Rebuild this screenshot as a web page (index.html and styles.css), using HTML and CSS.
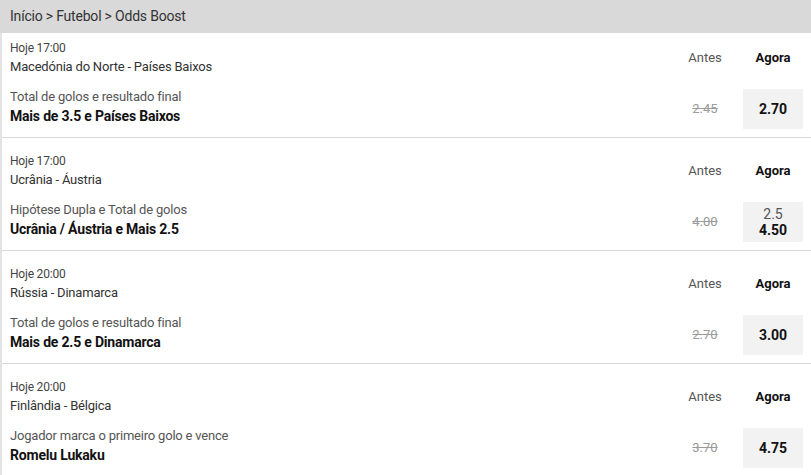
FILE: index.html
```html
<!DOCTYPE html>
<html lang="pt">
<head>
<meta charset="utf-8">
<link rel="stylesheet" href="styles.css">
</head>
<body>
<div class="crumbs">Início &gt; Futebol &gt; Odds Boost</div>
<div class="list">
  <div class="row first">
    <div class="head">
      <div class="info">
        <div class="time">Hoje 17:00</div>
        <div class="teams">Macedónia do Norte - Países Baixos</div>
      </div>
      <div class="col antes-lbl">Antes</div>
      <div class="col agora-lbl">Agora</div>
    </div>
    <div class="body">
      <div class="info">
        <div class="market">Total de golos e resultado final</div>
        <div class="sel">Mais de 3.5 e Países Baixos</div>
      </div>
      <div class="col old">2.45</div>
      <div class="col box"><span class="odd">2.70</span></div>
    </div>
  </div>
  <div class="row">
    <div class="head">
      <div class="info">
        <div class="time">Hoje 17:00</div>
        <div class="teams">Ucrânia - Áustria</div>
      </div>
      <div class="col antes-lbl">Antes</div>
      <div class="col agora-lbl">Agora</div>
    </div>
    <div class="body">
      <div class="info">
        <div class="market">Hipótese Dupla e Total de golos</div>
        <div class="sel">Ucrânia / Áustria e Mais 2.5</div>
      </div>
      <div class="col old">4.00</div>
      <div class="col box"><span class="line">2.5</span><span class="odd">4.50</span></div>
    </div>
  </div>
  <div class="row">
    <div class="head">
      <div class="info">
        <div class="time">Hoje 20:00</div>
        <div class="teams">Rússia - Dinamarca</div>
      </div>
      <div class="col antes-lbl">Antes</div>
      <div class="col agora-lbl">Agora</div>
    </div>
    <div class="body">
      <div class="info">
        <div class="market">Total de golos e resultado final</div>
        <div class="sel">Mais de 2.5 e Dinamarca</div>
      </div>
      <div class="col old">2.70</div>
      <div class="col box"><span class="odd">3.00</span></div>
    </div>
  </div>
  <div class="row">
    <div class="head">
      <div class="info">
        <div class="time">Hoje 20:00</div>
        <div class="teams">Finlândia - Bélgica</div>
      </div>
      <div class="col antes-lbl">Antes</div>
      <div class="col agora-lbl">Agora</div>
    </div>
    <div class="body">
      <div class="info">
        <div class="market">Jogador marca o primeiro golo e vence</div>
        <div class="sel">Romelu Lukaku</div>
      </div>
      <div class="col old">3.70</div>
      <div class="col box"><span class="odd">4.75</span></div>
    </div>
  </div>
</div>
</body>
</html>
```

FILE: styles.css
```css
html, body {
  margin: 0;
  padding: 0;
}
body {
  background: #e3e3e3;
  font-family: Roboto, "Liberation Sans", sans-serif;
  color: #333;
  width: 811px;
  height: 475px;
  overflow: hidden;
}
.crumbs {
  background: #d9d9d9;
  height: 33px;
  line-height: 33px;
  padding-left: 10px;
  font-size: 14px;
  color: #333;
  letter-spacing: -0.2px;
}
.list {
  margin-left: 2px;
  display: flex;
  flex-direction: column;
  gap: 1px;
  background: #d9d9d9;
}
.row {
  background: #fff;
  padding: 14px 8px 7px 8px;
  display: flex;
  flex-direction: column;
  gap: 11px;
}
.row.first {
  padding-top: 6px;
}
.head {
  display: flex;
  align-items: center;
  gap: 8px;
}
.body {
  display: flex;
  align-items: flex-end;
  gap: 8px;
}
.info {
  flex: 1;
  min-width: 0;
  letter-spacing: -0.2px;
}
.time {
  font-size: 12px;
  line-height: 18px;
  color: #444;
}
.teams {
  font-size: 13px;
  line-height: 19px;
  color: #333;
}
.market {
  font-size: 13px;
  line-height: 19px;
  color: #555;
}
.sel {
  font-size: 14px;
  line-height: 20px;
  font-weight: 700;
  color: #111;
}
.body .info {
  padding-bottom: 4px;
}
.col {
  width: 60px;
  text-align: center;
  flex: none;
}
.antes-lbl {
  font-size: 13px;
  color: #555;
}
.agora-lbl {
  font-size: 13px;
  font-weight: 700;
  color: #111;
}
.old {
  font-size: 13px;
  height: 40px;
  line-height: 40px;
  margin-bottom: 1px;
  color: #9a9a9a;
  text-decoration: line-through;
}
.box {
  height: 40px;
  margin-bottom: 1px;
  background: #f2f2f2;
  display: flex;
  flex-direction: column;
  align-items: center;
  justify-content: center;
}
.line {
  font-size: 14px;
  line-height: 15px;
  color: #555;
}
.odd {
  font-size: 14px;
  line-height: 16px;
  font-weight: 700;
  color: #111;
}
```
